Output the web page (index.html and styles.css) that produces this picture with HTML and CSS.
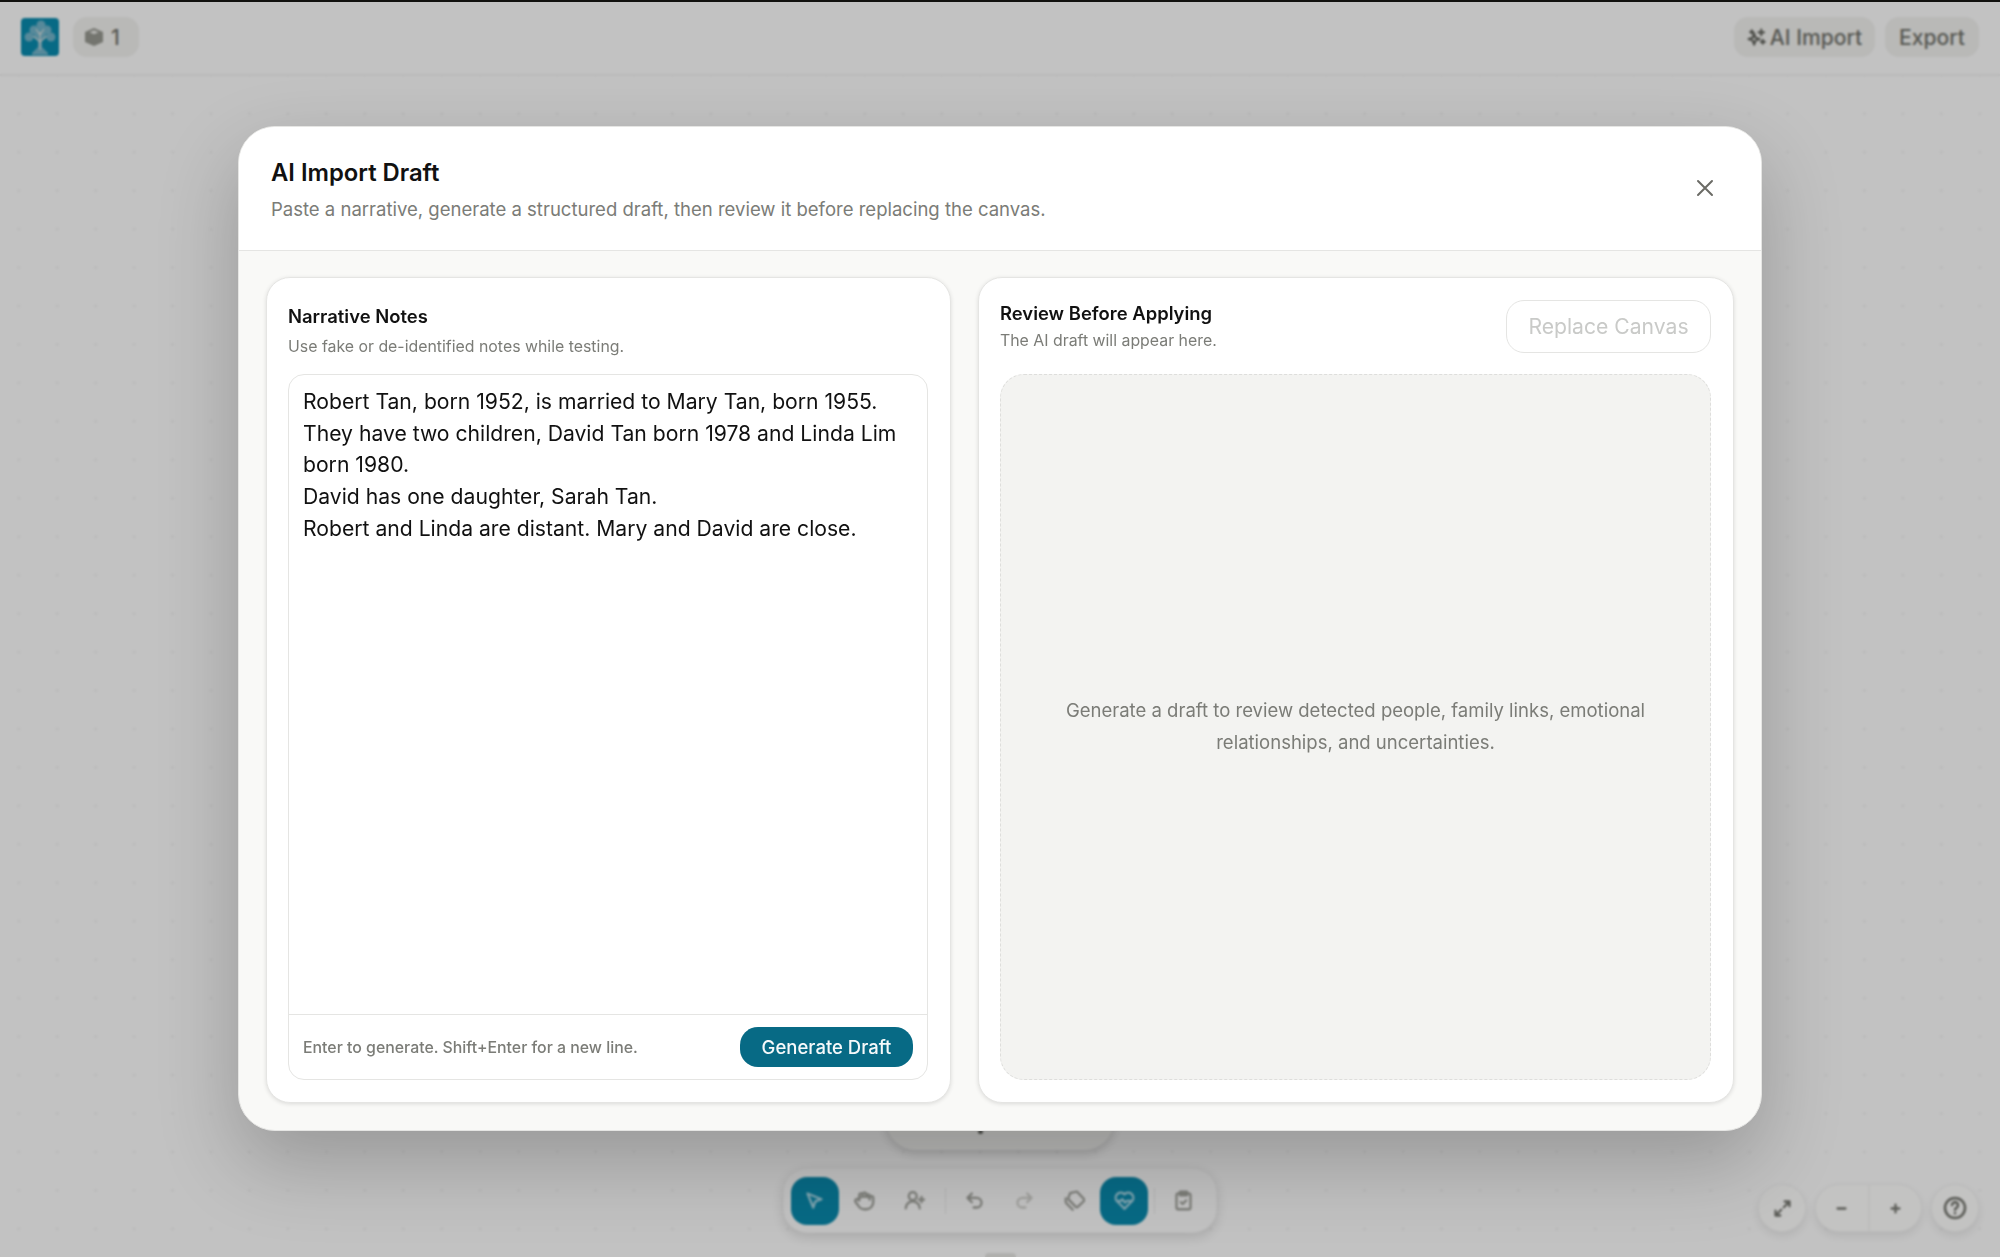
FILE: index.html
```html
<!DOCTYPE html>
<html lang="en">
<head>
    <meta charset="utf-8">
    <title>AI Import Draft</title>
    <link rel="stylesheet" href="styles.css">
</head>
<body>
    <div class="app">
        <header class="topbar">
            <div class="group">
                <svg class="logo" viewBox="0 0 38 38">
                    <rect width="38" height="38" rx="4" fill="#076a85"/>
                    <g fill="#56899a">
                        <circle cx="20" cy="7" r="4.500"/>
                        <circle cx="13" cy="12" r="4.500"/>
                        <circle cx="26" cy="12" r="4.500"/>
                        <circle cx="8" cy="19" r="4.500"/>
                        <circle cx="30" cy="19" r="4.500"/>
                        <circle cx="19" cy="16" r="6"/>
                        <path d="M17 20h4v9l6 6v2H11v-2l6-6z"/>
                    </g>
                    <path d="M19 32V14M19 24l-7-6M19 24l7-6M19 17l-4-6M19 17l4-6" fill="none" stroke="#a3a9a9" stroke-width="1.2"/>
                </svg>
                <div class="chip chip-layers">
                    <svg viewBox="0 0 20 20" width="20" height="20">
                        <path d="M10 1l9 4v10l-9 4-9-4V5z" fill="#74756f"/>
                        <path d="M10 3.200l4.500 2-4.500 2-4.500-2z" fill="#b4b4b1"/>
                    </svg>
                    <span>1</span>
                </div>
            </div>
            <div class="group">
                <div class="chip chip-import">
                    <svg class="icon dark" viewBox="0 0 24 24" width="20" height="20">
                        <path d="M9 7l1.800 5.200L16 14l-5.200 1.800L9 21l-1.800-5.200L2 14l5.200-1.800zM18 2v7M14.500 5.500h7M20 15v5M17.500 17.500h5M6 3v4M4 5h4"/>
                    </svg>
                    <span>AI Import</span>
                </div>
                <div class="chip chip-export"><span>Export</span></div>
            </div>
        </header>

        <main class="canvas">
            <div class="hint-pill"></div>
            <div class="toolbar">
                <div class="tool active">
                    <svg class="icon" viewBox="0 0 24 24"><path d="M4 4l16 6.500-7 2.500-2.500 7z"/></svg>
                </div>
                <div class="tool">
                    <svg class="icon" viewBox="0 0 24 24"><path d="M18 11V7a2 2 0 0 0-4 0V5a2 2 0 0 0-4 0v1a2 2 0 0 0-4 0v6l-1-1a2 2 0 0 0-3 3l3 4a8 8 0 0 0 7 4h2a8 8 0 0 0 8-8V9a2 2 0 0 0-4 0M6 9c3-2 9-2 12 0"/></svg>
                </div>
                <div class="tool">
                    <svg class="icon" viewBox="0 0 24 24"><circle cx="10" cy="7" r="4.500"/><path d="M2 21a8 8 0 0 1 16 0M20 8v6M17 11h6"/></svg>
                </div>
                <div class="sep"></div>
                <div class="tool">
                    <svg class="icon" viewBox="0 0 24 24"><path d="M9 14L4 9l5-5M4 9h10.500a5.500 5.500 0 0 1 0 11H11"/></svg>
                </div>
                <div class="tool faded">
                    <svg class="icon" viewBox="0 0 24 24"><path d="M15 14l5-5-5-5M20 9H9.500a5.500 5.500 0 0 0 0 11H13"/></svg>
                </div>
                <div class="tool">
                    <svg class="icon" viewBox="0 0 24 24"><path d="M7 3.500L13.500 2a2 2 0 0 1 2 .6L22.500 10a2 2 0 0 1 0 2.800L16 19a2 2 0 0 1-2.800 0L5.500 11a2 2 0 0 1-.5-2zM2 9.500v4a2 2 0 0 0 .6 1.500l7.400 7.500"/></svg>
                </div>
                <div class="tool active">
                    <svg class="icon" viewBox="0 0 24 24"><path d="M12 21.500L2.800 12A5.800 5.800 0 0 1 12 5a5.800 5.800 0 0 1 9.200 7zM3 12.500h5l1.500-2 3 4 2-2H21"/></svg>
                </div>
                <div class="sep sep-end"></div>
                <div class="tool">
                    <svg class="icon" viewBox="0 0 24 24"><rect x="4" y="4" width="16" height="18" rx="2"/><path d="M8 2h8v4H8zM9 14l2 2 4-4"/></svg>
                </div>
            </div>
            <div class="view-controls">
                <div class="round">
                    <svg class="icon dark" viewBox="0 0 24 24"><path d="M14.500 4H20v5.500M20 4l-6.500 6.500M9.500 20H4v-5.500M4 20l6.500-6.500"/></svg>
                </div>
                <div class="zoom">
                    <div class="zoom-half"><svg class="icon dark" viewBox="0 0 24 24"><path d="M7.500 12h9"/></svg></div>
                    <div class="zoom-half"><svg class="icon dark" viewBox="0 0 24 24"><path d="M7.500 12h9M12 7.500v9"/></svg></div>
                </div>
                <div class="round">
                    <svg class="icon dark help" viewBox="0 0 24 24"><circle cx="12" cy="12" r="10"/><path d="M9 9a3 3 0 1 1 4.500 2.800c-1 .6-1.500 1-1.500 2M12 17v.2"/></svg>
                </div>
            </div>
            <div class="drawer-handle"></div>
        </main>
    </div>

    <div class="overlay">
        <section class="modal">
            <header class="modal-head">
                <div>
                    <h1>AI Import Draft</h1>
                    <p>Paste a narrative, generate a structured draft, then review it before replacing the canvas.</p>
                </div>
                <svg class="close" viewBox="0 0 16 16"><path d="M1 1l14 14M15 1L1 15"/></svg>
            </header>
            <div class="modal-body">
                <div class="card notes">
                    <h2>Narrative Notes</h2>
                    <p class="sub">Use fake or de-identified notes while testing.</p>
                    <div class="editor">
                        <div class="text">Robert Tan, born 1952, is married to Mary Tan, born 1955.<br>They have two children, David Tan born 1978 and Linda Lim<br>born 1980.<br>David has one daughter, Sarah Tan.<br>Robert and Linda are distant. Mary and David are close.</div>
                        <div class="editor-foot">
                            <span>Enter to generate. Shift+Enter for a new line.</span>
                            <button class="generate">Generate Draft</button>
                        </div>
                    </div>
                </div>
                <div class="card review">
                    <div class="review-head">
                        <div>
                            <h2>Review Before Applying</h2>
                            <p class="sub">The AI draft will appear here.</p>
                        </div>
                        <button class="replace" disabled>Replace Canvas</button>
                    </div>
                    <div class="empty">Generate a draft to review detected people, family links, emotional<br>relationships, and uncertainties.</div>
                </div>
            </div>
        </section>
    </div>
    <div class="window-edge"></div>
</body>
</html>
```
FILE: styles.css
```css
* {
    box-sizing: border-box;
}
body {
    margin: 0;
    height: 1257px;
    overflow: hidden;
    background: #c2c2c2;
    font-family: Inter, "Liberation Sans", sans-serif;
    color: #111;
}
h1, h2, p {
    margin: 0;
}
button {
    font-family: inherit;
    padding: 0;
}
.window-edge {
    position: fixed;
    top: 0;
    left: 0;
    right: 0;
    height: 2px;
    background: #11110f;
}

/* app behind the dialog */
.app {
    display: flex;
    flex-direction: column;
    height: 1257px;
}
.topbar {
    height: 76px;
    padding: 17px 21px 0;
    display: flex;
    justify-content: space-between;
    border-bottom: 2px solid #bababa;
}
.group {
    display: flex;
    align-items: flex-start;
    gap: 10px;
}
.logo {
    width: 38px;
    height: 38px;
    margin: 1px 4px 0 0;
}
.chip {
    height: 40px;
    display: flex;
    align-items: center;
    justify-content: center;
    border-radius: 14px;
    background: #b9b9b7;
    color: #565752;
    font-size: 21.1px;
    font-weight: 500;
}
.chip-layers {
    width: 66px;
    padding-right: 8px;
    gap: 7px;
}
.chip-import {
    width: 141px;
    gap: 4px;
}
.chip-export {
    width: 94px;
}
.icon {
    width: 21px;
    height: 21px;
    fill: none;
    stroke: #7c7d78;
    stroke-width: 2.6;
    stroke-linecap: round;
    stroke-linejoin: round;
}
.icon.dark {
    stroke: #5c5d58;
}
.chip .icon {
    width: 19px;
    height: 19px;
    stroke: #4c4d48;
}
.canvas {
    flex: 1;
    position: relative;
    background-image: radial-gradient(circle, #bbb 1.3px, transparent 1.8px);
    background-size: 38.46px 38.46px;
    background-position: -0.5px 18.5px;
}
.hint-pill {
    position: absolute;
    left: 886px;
    bottom: 107px;
    width: 228px;
    height: 60px;
    border-radius: 30px;
    background: #bdbdbb;
    box-shadow: 0 4px 10px rgba(0, 0, 0, .15);
}
/* tail of the last letter in the pill */
.hint-pill::after {
    content: "";
    position: absolute;
    left: 92px;
    bottom: 16px;
    width: 5px;
    height: 4px;
    border-radius: 2px;
    background: #4c4d48;
}
.toolbar {
    position: absolute;
    left: 783px;
    bottom: 24px;
    width: 434px;
    height: 65px;
    padding: 0 7px;
    display: flex;
    align-items: center;
    border-radius: 24px;
    background: #c2c2c2;
    border: 1px solid #bbb;
    box-shadow: 0 4px 12px rgba(0, 0, 0, .13);
}
.tool {
    width: 48px;
    height: 48px;
    margin-right: 2px;
    display: flex;
    align-items: center;
    justify-content: center;
    border-radius: 16px;
}
.tool.active {
    background: #076a85;
}
.tool.active .icon {
    stroke: #7fa5b0;
}
.tool.faded .icon {
    stroke: #a0a09d;
}
.sep {
    width: 1px;
    height: 26px;
    margin: 0 5px 0 4px;
    background: #b4b4b2;
}
.sep-end {
    margin: 0 4px 0 4px;
}
.view-controls {
    position: absolute;
    right: 21px;
    bottom: 25px;
    display: flex;
    gap: 9px;
}
.round, .zoom {
    height: 48px;
    display: flex;
    align-items: center;
    justify-content: center;
    border-radius: 24px;
    border: 1px solid #bbb;
    background: #c3c3c2;
    box-shadow: 0 4px 8px rgba(0, 0, 0, .08);
}
.round {
    width: 48px;
}
.zoom {
    width: 107px;
}
.zoom-half {
    flex: 1;
    height: 46px;
    display: flex;
    align-items: center;
    justify-content: center;
}
.zoom-half + .zoom-half {
    border-left: 2px solid #bcbcbb;
}
.icon.help {
    width: 24px;
    height: 24px;
}
.drawer-handle {
    position: absolute;
    left: 985px;
    bottom: 0;
    width: 31px;
    height: 4px;
    border-radius: 4px 4px 0 0;
    background: #b0b0ae;
}

/* dialog */
.overlay {
    position: fixed;
    inset: 0;
    display: flex;
    align-items: center;
    justify-content: center;
    backdrop-filter: blur(1px);
}
.modal {
    width: 1524px;
    height: 1005px;
    display: flex;
    flex-direction: column;
    overflow: hidden;
    border-radius: 37px;
    border: 1px solid #e5e5e3;
    background: #f9f9f7;
    box-shadow: 0 32px 80px rgba(0, 0, 0, .22);
}
.modal-head {
    height: 124px;
    padding: 30px 48px 0 32px;
    display: flex;
    justify-content: space-between;
    background: #fff;
    border-bottom: 1px solid #e5e5e3;
}
.modal-head h1 {
    font-size: 23.8px;
    line-height: 32px;
    font-weight: 600;
}
.modal-head p {
    margin-top: 7px;
    font-size: 18.52px;
    line-height: 26px;
    color: #7b7c77;
}
.close {
    width: 16px;
    height: 16px;
    margin-top: 23px;
    overflow: visible;
    fill: none;
    stroke: #6b6b66;
    stroke-width: 2;
    stroke-linecap: round;
}
.modal-body {
    flex: 1;
    display: flex;
    gap: 27px;
    padding: 26px 27px 27px;
}
.card {
    display: flex;
    flex-direction: column;
    padding: 22px 22px 22px 21px;
    border-radius: 24px;
    border: 1px solid #e5e5e3;
    background: #fff;
    box-shadow: 0 1px 4px rgba(0, 0, 0, .12);
}
.notes {
    width: 685px;
}
.review {
    flex: 1;
}
.card h2 {
    font-size: 18.45px;
    line-height: 26px;
    font-weight: 600;
}
.card .sub {
    margin-top: 6px;
    font-size: 15.86px;
    line-height: 24px;
    color: #7b7c77;
}
.notes h2 {
    margin-top: 3px;
}
.editor {
    flex: 1;
    margin-top: 15px;
    display: flex;
    flex-direction: column;
    border: 1px solid #e5e5e3;
    border-radius: 16px;
}
.text {
    flex: 1;
    padding: 11px 14px;
    font-size: 21.15px;
    line-height: 31.7px;
    white-space: nowrap;
}
.editor-foot {
    height: 65px;
    padding: 0 14px;
    display: flex;
    align-items: center;
    justify-content: space-between;
    border-top: 1px solid #e5e5e3;
    font-size: 15.86px;
    font-weight: 500;
    color: #7b7c77;
}
.generate {
    width: 173px;
    height: 40px;
    border: 0;
    border-radius: 18px;
    background: #076a85;
    color: #f6f9fa;
    font-size: 18.5px;
    font-weight: 500;
}
.review-head {
    height: 74px;
    display: flex;
    justify-content: space-between;
    align-items: flex-start;
}
.review .sub {
    margin-top: 3px;
}
.replace {
    width: 205px;
    height: 53px;
    border: 1px solid #e5e5e3;
    border-radius: 18px;
    background: #fff;
    color: #c9cac8;
    font-size: 21.15px;
}
.empty {
    flex: 1;
    display: flex;
    align-items: center;
    justify-content: center;
    border: 1px dashed #dededc;
    border-radius: 24px;
    background: #f3f3f1;
    color: #7b7c77;
    font-size: 18.52px;
    line-height: 31.7px;
    text-align: center;
}
```
